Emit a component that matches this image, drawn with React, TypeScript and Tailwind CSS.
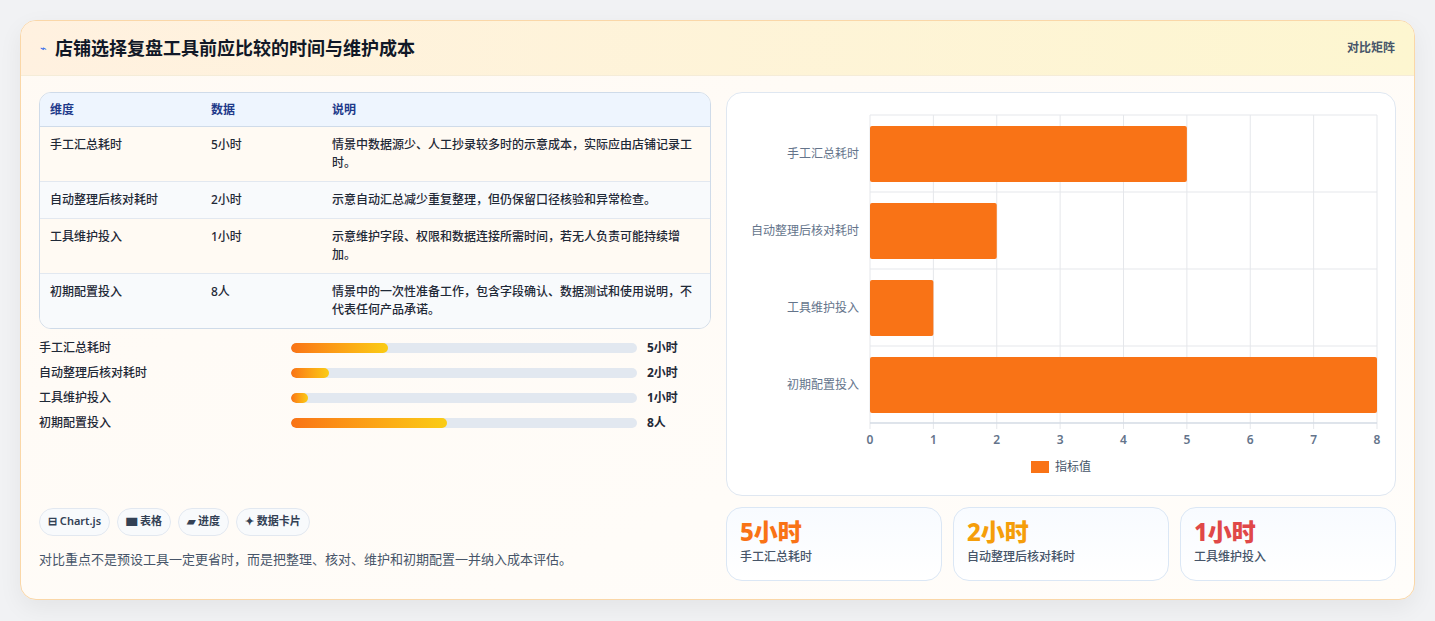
const rows = [
  { k: "手工汇总耗时", v: "5小时", d: "情景中数据源少、人工抄录较多时的示意成本，实际应由店铺记录工时。", n: 5, p: 28 },
  { k: "自动整理后核对耗时", v: "2小时", d: "示意自动汇总减少重复整理，但仍保留口径核验和异常检查。", n: 2, p: 11 },
  { k: "工具维护投入", v: "1小时", d: "示意维护字段、权限和数据连接所需时间，若无人负责可能持续增加。", n: 1, p: 5 },
  { k: "初期配置投入", v: "8人", d: "情景中的一次性准备工作，包含字段确认、数据测试和使用说明，不代表任何产品承诺。", n: 8, p: 45 },
];

const Chart = () => {
  const x0 = 143, w = 507, top = 22, band = 77;
  const ux = w / 8;
  return (
    <svg width="668" height="402" className="block">
      {Array.from({ length: 9 }).map((_, i) => (
        <line key={i} x1={x0 + i * ux} x2={x0 + i * ux} y1={top} y2={top + band * 4 + 6} stroke="#e5e7eb" />
      ))}
      {Array.from({ length: 5 }).map((_, i) => (
        <line key={i} x1={x0} x2={x0 + w} y1={top + i * band} y2={top + i * band} stroke="#e5e7eb" />
      ))}
      <line x1={x0} x2={x0 + w} y1={top + band * 4} y2={top + band * 4} stroke="#cbd5e1" />
      {rows.map((r, i) => (
        <g key={r.k}>
          <rect x={x0} y={top + i * band + 11} width={r.n * ux} height={56} rx={2} fill="#f97316" />
          <text x={x0 - 11} y={top + i * band + 43} textAnchor="end" fontSize="12" fill="#64748b">{r.k}</text>
        </g>
      ))}
      {Array.from({ length: 9 }).map((_, i) => (
        <text key={i} x={x0 + i * ux} y={351} textAnchor="middle" fontSize="12" fontWeight="600" fill="#64748b">{i}</text>
      ))}
      <rect x={304} y={368} width={18} height={12} fill="#f97316" />
      <text x={328} y={378} fontSize="12" fill="#475569">指标值</text>
    </svg>
  );
};

export default function App() {
  return (
    <div className="w-[1435px] h-[621px] bg-[#f1f2f4] pt-[20px] pl-[20px]" style={{ fontFamily: '"Noto Sans", "Noto Sans CJK SC", sans-serif' }}>
      <div className="w-[1395px] h-[580px] rounded-2xl border border-[#fad7a8] bg-gradient-to-br from-[#fffaf4] to-[#fffdfa] overflow-hidden shadow-[0_8px_24px_rgba(0,0,0,0.06)]">
        <div className="h-[55px] flex items-center justify-between px-[19px] bg-gradient-to-r from-[#fff1e0] to-[#fdf6d0] border-b border-[#f5ecd8]">
          <div className="flex items-center gap-2">
            <span className="text-[#2563eb] text-[11px]">⌁</span>
            <h1 className="text-[18px] font-bold text-[#111827]">店铺选择复盘工具前应比较的时间与维护成本</h1>
          </div>
          <span className="text-[12px] text-[#475569] font-semibold">对比矩阵</span>
        </div>
        <div className="flex gap-[15px] px-[18px] pt-[16px]">
          <div className="w-[672px] h-[490px] flex flex-col">
            <div className="rounded-xl border border-[#cfdbe9] overflow-hidden text-[12px]">
              <div className="flex h-[34px] items-center bg-[#eef5fe] border-b border-[#cfdbe9] text-[#1e3a8a] font-semibold">
                <div className="w-[171px] pl-[10px]">维度</div>
                <div className="w-[121px]">数据</div>
                <div className="flex-1">说明</div>
              </div>
              {rows.map((r, i) => (
                <div key={r.k} className={`flex py-[9px] leading-[18px] text-[#1f2937] font-medium ${i < 3 ? "border-b border-[#e2e8f0]" : ""} ${i % 2 ? "bg-[#f8fafc]" : "bg-[#fffaf3]"}`}>
                  <div className="w-[171px] pl-[10px]">{r.k}</div>
                  <div className="w-[121px]">{r.v}</div>
                  <div className="flex-1 pr-[16px]">{r.d}</div>
                </div>
              ))}
            </div>
            <div className="mt-[10px] flex flex-col gap-[7px]">
              {rows.map((r) => (
                <div key={r.k} className="flex items-center h-[18px] text-[12px] font-medium text-[#1f2937]">
                  <div className="w-[252px]">{r.k}</div>
                  <div className="w-[346px] h-[10px] rounded-full bg-[#e2e8f0] overflow-hidden">
                    <div className="h-full rounded-full bg-gradient-to-r from-[#f97316] to-[#facc15]" style={{ width: `${r.p}%` }} />
                  </div>
                  <div className="ml-[10px] font-bold">{r.v}</div>
                </div>
              ))}
            </div>
            <div className="mt-auto flex gap-[7px] text-[11px] font-semibold text-[#334155]">
              {["⊟ Chart.js", "▆ 表格", "▰ 进度", "✦ 数据卡片"].map((c) => (
                <span key={c} className="px-[8px] h-[28px] flex items-center rounded-full border border-[#e2e8f0] bg-[#f8fafc]">{c}</span>
              ))}
            </div>
            <p className="mt-[14px] mb-[13px] text-[13px] text-[#475569]">对比重点不是预设工具一定更省时，而是把整理、核对、维护和初期配置一并纳入成本评估。</p>
          </div>
          <div className="w-[670px] flex flex-col gap-[11px]">
            <div className="h-[404px] rounded-2xl border border-[#dfe7f1] bg-white overflow-hidden">
              <Chart />
            </div>
            <div className="grid grid-cols-3 gap-[11px]">
              {[["5小时", "手工汇总耗时", "text-[#f97316]"], ["2小时", "自动整理后核对耗时", "text-[#f59e0b]"], ["1小时", "工具维护投入", "text-[#e04848]"]].map(([v, l, c]) => (
                <div key={l} className="h-[74px] rounded-2xl border border-[#dbe7f5] bg-gradient-to-b from-[#f8fbff] to-white px-[13px] pt-[8px]">
                  <div className={`text-[24px] font-extrabold leading-[32px] ${c}`}>{v}</div>
                  <div className="text-[12px] text-[#475569] font-medium">{l}</div>
                </div>
              ))}
            </div>
          </div>
        </div>
      </div>
    </div>
  );
}
